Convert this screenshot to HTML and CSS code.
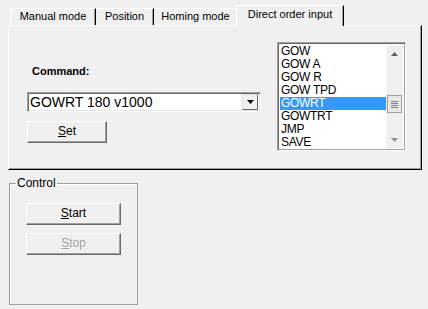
FILE: index.html
```html
<!DOCTYPE html>
<html>
<head>
<meta charset="utf-8">
<link rel="stylesheet" href="styles.css">
</head>
<body>
<div class="tabs">
  <div class="tab t1">Manual mode</div>
  <div class="tab t2">Position</div>
  <div class="tab t3">Homing mode</div>
  <div class="tab active">Direct order input</div>
</div>
<div class="panel">
  <div class="left">
    <div class="label">Command:</div>
    <div class="combo">
      <span class="combo-text">GOWRT 180 v1000</span>
      <span class="combo-btn"><svg width="7" height="4" viewBox="0 0 7 4"><polygon points="0,0 7,0 3.5,4" fill="#000"/></svg></span>
    </div>
    <div class="btn set"><u>S</u>et</div>
  </div>
  <div class="listbox">
    <div class="items">
      <div class="item">GOW</div>
      <div class="item">GOW A</div>
      <div class="item">GOW R</div>
      <div class="item">GOW TPD</div>
      <div class="item sel">GOWRT</div>
      <div class="item">GOWTRT</div>
      <div class="item">JMP</div>
      <div class="item">SAVE</div>
    </div>
    <div class="scroll">
      <div class="arrow up"><svg width="7" height="4" viewBox="0 0 7 4"><polygon points="3.5,0 7,4 0,4" fill="#606060"/></svg></div>
      <div class="track">
        <div class="thumb"><i></i><i></i><i></i><i></i></div>
      </div>
      <div class="arrow down"><svg width="7" height="4" viewBox="0 0 7 4"><polygon points="0,0 7,0 3.5,4" fill="#909090"/></svg></div>
    </div>
  </div>
</div>
<fieldset class="group">
  <legend>Control</legend>
  <div class="btn start"><u>S</u>tart</div>
  <div class="btn stop disabled"><u>S</u>top</div>
</fieldset>
</body>
</html>
```
FILE: styles.css
```css
html, body {
  margin: 0;
  padding: 0;
  background: #f0f0f0;
  font-family: "Liberation Sans", Arial, sans-serif;
  font-size: 11px;
  color: #000;
}
.tabs {
  display: flex;
  align-items: flex-end;
  height: 20px;
  padding-top: 5px;
  padding-left: 10px;
}
.tab {
  box-sizing: border-box;
  height: 17px;
  border-top: 1px solid #fff;
  border-left: 1px solid #fff;
  border-right: 1px solid #000;
  box-shadow: inset -1px 0 #a0a0a0;
  line-height: 15px;
  text-align: center;
  white-space: nowrap;
}
.t1 { width: 86px; }
.t2 { width: 58px; border-left: none; }
.t3 { width: 84px; border-left: none; }
.tab.active {
  position: relative;
  z-index: 1;
  margin-left: -2px;
  width: 108px;
  height: 21px;
  margin-bottom: -1px;
  background: #f0f0f0;
  line-height: 17px;
  padding-bottom: 2px;
}
.panel {
  box-sizing: border-box;
  margin-left: 8px;
  width: 414px;
  height: 145px;
  border-top: 1px solid #fff;
  border-left: 1px solid #fff;
  border-right: 1px solid #000;
  border-bottom: 1px solid #000;
  box-shadow: inset -1px -1px #a0a0a0;
  display: flex;
}
.left {
  padding-left: 18px;
  width: 234px;
}
.label {
  font-weight: bold;
  margin-top: 39px;
  padding-left: 5px;
  height: 13px;
  line-height: 13px;
}
.combo {
  box-sizing: border-box;
  margin-top: 14px;
  width: 234px;
  height: 20px;
  background: #fff;
  border-top: 1px solid #a0a0a0;
  border-left: 1px solid #a0a0a0;
  border-right: 1px solid #fff;
  border-bottom: 1px solid #fff;
  box-shadow: inset 1px 1px #696969, inset -1px -1px #e3e3e3;
  display: flex;
  align-items: center;
  justify-content: space-between;
  padding: 0 2px 0 2px;
  font-size: 14px;
}
.combo-btn {
  box-sizing: border-box;
  width: 16px;
  height: 16px;
  background: #f0f0f0;
  border-top: 1px solid #e3e3e3;
  border-left: 1px solid #e3e3e3;
  border-right: 1px solid #696969;
  border-bottom: 1px solid #696969;
  display: flex;
  align-items: center;
  justify-content: center;
}
.btn {
  box-sizing: border-box;
  height: 22px;
  border-top: 1px solid #fff;
  border-left: 1px solid #fff;
  border-right: 1px solid #696969;
  border-bottom: 1px solid #696969;
  box-shadow: inset -1px -1px #a0a0a0;
  background: #f0f0f0;
  text-align: center;
  line-height: 19px;
  font-size: 12px;
}
.set {
  width: 80px;
  margin-top: 9px;
}
.listbox {
  box-sizing: border-box;
  margin-left: 16px;
  margin-top: 16px;
  width: 129px;
  height: 109px;
  border-top: 1px solid #a0a0a0;
  border-left: 1px solid #a0a0a0;
  border-right: 1px solid #fff;
  border-bottom: 1px solid #fff;
  box-shadow: inset 1px 1px #696969, inset -1px -1px #a0a0a0;
  background: #fff;
  display: flex;
  padding: 2px;
}
.items {
  flex: 1;
}
.item {
  height: 13px;
  line-height: 13px;
  padding-left: 1px;
  font-size: 12px;
  letter-spacing: -0.3px;
}
.item.sel {
  background: #3399ff;
  color: #fff;
}
.scroll {
  width: 17px;
  display: flex;
  flex-direction: column;
  background: #f0f0f0;
}
.arrow {
  height: 17px;
  display: flex;
  align-items: center;
  justify-content: center;
}
.track {
  flex: 1;
  padding-top: 33px;
}
.thumb {
  box-sizing: border-box;
  height: 18px;
  margin: 0 1px;
  border: 1px solid #a0a0a0;
  background: #e8e8e8;
  display: flex;
  flex-direction: column;
  align-items: center;
  justify-content: center;
  gap: 1px;
}
.thumb i {
  display: block;
  width: 7px;
  height: 1px;
  background: #808080;
}
.group {
  box-sizing: border-box;
  margin: 7px 0 0 9px;
  width: 129px;
  height: 128px;
  padding: 0 0 0 16px;
  border: 1px solid #a0a0a0;
  box-shadow: inset 1px 1px #fff;
}
.group legend {
  padding: 0 1px;
  margin-left: -10px;
  font-size: 12px;
  line-height: 13px;
}
.start {
  width: 95px;
  margin-top: 13px;
}
.stop {
  width: 95px;
  margin-top: 8px;
}
.disabled {
  color: #a0a0a0;
  text-shadow: 1px 1px #fff;
}
```
